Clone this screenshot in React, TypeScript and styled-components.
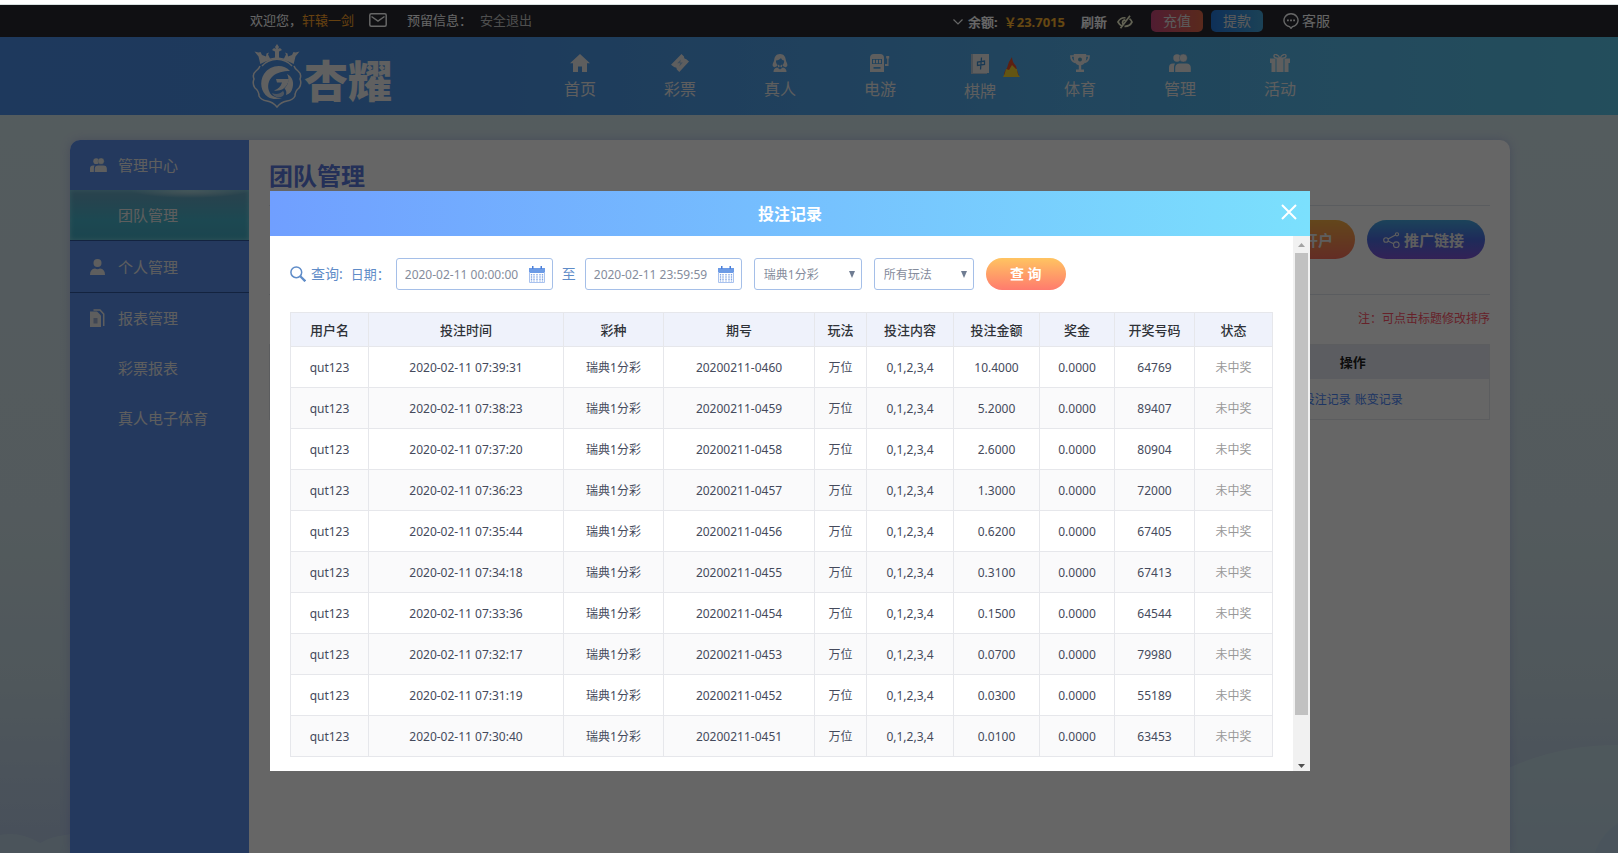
import React from "react";
import styled, { createGlobalStyle, css } from "styled-components";

const GlobalStyle = createGlobalStyle`
  *, *::before, *::after { box-sizing: border-box; }
  body {
    margin: 0;
    background: #fff;
    font-family: "Noto Sans", "Noto Sans CJK SC", sans-serif;
    font-size: 13px;
    line-height: 20px;
  }
  button, input, select { font-family: inherit; margin: 0; }
  a { text-decoration: none; color: inherit; }
  h1, h2, p, ul { margin: 0; padding: 0; }
  svg { display: block; flex: none; }
`;

/* ---------- page frame ---------- */

const Page = styled.div`
  position: relative;
  display: flex;
  flex-direction: column;
  height: 100vh;
  min-height: 640px;
  overflow: hidden;
  border-top: 4px solid #fff;
  background: linear-gradient(#d4e6ed 0%, #d0e2e8 60%, #c6dae4 80%, #b2c6e2 100%);
`;

const Hills = styled.svg`
  position: absolute;
  left: 0;
  bottom: 0;
  width: 100%;
  height: 110px;
`;

const TopBar = styled.header`
  display: flex;
  justify-content: center;
  padding-right: 38px;
  background: #282a31;
  border-top: 1px solid #d8e0e0;
`;

const TopInner = styled.div`
  display: flex;
  align-items: center;
  width: 1080px;
  height: 32px;
  padding-bottom: 2px;
  color: #fff;
`;

const UserName = styled.span`
  color: #ffa42a;
`;

const MailLink = styled.a`
  margin: 0 20px 0 15px;
`;

const LogoutLink = styled.a`
  margin-left: 8px;
  color: #c4c4c4;
`;

const Balance = styled.div`
  display: flex;
  align-items: center;
  margin-left: auto;
  padding-top: 4px;
  font-weight: 700;
`;

const Amount = styled.span`
  margin: 0 16px 0 6px;
  color: #ffb52e;
`;

const PlainButton = styled.button`
  padding: 0;
  border: 0;
  background: none;
  color: inherit;
  font: inherit;
  line-height: inherit;
`;

const EyeButton = styled(PlainButton)`
  margin: 0 18px 0 10px;
`;

const MoneyButton = styled.button<{ $tone: string }>`
  width: 52px;
  height: 22px;
  margin: 2px 8px 0 0;
  padding: 0;
  border: 0;
  border-radius: 5px;
  background: ${(p) => p.$tone};
  color: #e4e4e4;
  font-size: 14px;
  line-height: 22px;
`;

const ServiceLink = styled.a`
  display: flex;
  align-items: center;
  gap: 3px;
  margin: 2px 0 0 12px;
  font-size: 14px;
`;

const NavBar = styled.div`
  position: relative;
  display: flex;
  justify-content: center;
  padding-right: 38px;
  background: linear-gradient(90deg, #4b8ee8 0%, #4b94e6 30%, #56b2ea 72%, #58c2e6 100%);
`;

const NavInner = styled.div`
  display: flex;
  justify-content: space-between;
  width: 1080px;
  height: 78px;
`;

const Brand = styled.a`
  display: flex;
  align-items: center;
  padding-left: 2px;
  color: #f0f0f0;
  font-family: "Noto Sans CJK SC", sans-serif;
  font-size: 44px;
  font-weight: 900;
  line-height: 44px;
`;

const BrandName = styled.span`
  padding-top: 6px;
  margin-left: 2px;
`;

const NavList = styled.nav`
  display: flex;
`;

const NavLink = styled.a<{ $active?: boolean }>`
  position: relative;
  display: flex;
  flex-direction: column;
  align-items: center;
  gap: 6px;
  width: 100px;
  padding-top: 17px;
  color: #ececec;
  font-size: 16px;
  line-height: 22px;
  ${(p) =>
    p.$active &&
    css`
      background: rgba(0, 60, 140, 0.04);
    `}
`;

const HotMark = styled.span`
  position: absolute;
  top: 20px;
  right: 10px;
`;

/* ---------- management card ---------- */

const Main = styled.main`
  position: relative;
  display: flex;
  flex: 1;
  justify-content: center;
  padding: 25px 38px 0 0;
`;

const Card = styled.div`
  display: flex;
  width: 1440px;
  border-radius: 10px 10px 0 0;
  overflow: hidden;
  background: #fff;
  box-shadow: 0 0 10px rgba(120, 120, 210, 0.35);
`;

const Sidebar = styled.aside`
  flex: none;
  width: 179px;
  background: #5a8fec;
`;

const SideLink = styled.a<{ $active?: boolean; $height?: number }>`
  display: flex;
  align-items: center;
  height: ${(p) => p.$height ?? 50}px;
  padding-left: 20px;
  color: #ececec;
  font-size: 15px;
  ${(p) => p.$height && "border-bottom: 1px solid #31589f;"}
  ${(p) =>
    p.$active &&
    css`
      background: radial-gradient(ellipse 60px 8px at 67% 0, #c4dde2, rgba(196, 221, 226, 0)),
        linear-gradient(#6aa4c0, #48b4cc 60%, #44acc4);
      box-shadow: inset 0 0 5px #7fd2e0;
    `}
`;

const SideIcon = styled.span`
  width: 28px;
`;

const Content = styled.section`
  flex: 1;
  padding: 21px 20px 0;
`;

const PageTitle = styled.h1`
  padding-bottom: 14px;
  border-bottom: 1px solid #e2e6ee;
  color: #5a78dc;
  font-size: 24px;
  line-height: 30px;
`;

const Actions = styled.div`
  display: flex;
  justify-content: flex-end;
  gap: 12px;
  padding: 14px 5px 35px 0;
  border-bottom: 1px solid #e2e6ee;
`;

const PillButton = styled.button<{ $tone: string }>`
  display: flex;
  align-items: center;
  justify-content: center;
  gap: 4px;
  width: 118px;
  height: 39px;
  padding: 0 5px 0 0;
  border: 0;
  border-radius: 20px;
  background: ${(p) => p.$tone};
  color: #ececec;
  font-size: 15px;
  font-weight: 700;
`;

const SortNote = styled.p`
  padding: 14px 0 15px;
  color: #ff5468;
  font-size: 12px;
  text-align: right;
`;

const TeamTable = styled.table`
  width: 100%;
  border-collapse: collapse;
  table-layout: fixed;
  border: 1px solid #e6e8ee;
  text-align: center;

  th {
    height: 34px;
    padding: 0;
    background: #e6e9f2;
    color: #222;
    font-size: 13px;
  }
  td {
    height: 41px;
    padding: 2px 0 0;
    font-size: 12px;
  }
  th:last-child {
    width: 273px;
  }
  a {
    margin: 0 2px;
    color: #4a86f8;
  }
`;

/* ---------- bet record dialog ---------- */

const Overlay = styled.div`
  position: absolute;
  inset: 1px 0 0;
  display: flex;
  justify-content: center;
  align-items: flex-start;
  padding: 186px 38px 0 0;
  background: rgba(0, 0, 0, 0.6);
`;

const Dialog = styled.div`
  width: 1040px;
  background: #fff;
`;

const DialogHead = styled.div`
  display: grid;
  grid-template-columns: 42px 1fr 42px;
  align-items: center;
  height: 45px;
  background: linear-gradient(90deg, #709fff, #7be0fd);
  color: #fff;
`;

const DialogTitle = styled.h2`
  grid-column: 2;
  font-size: 16px;
  line-height: 24px;
  text-align: center;
`;

const CloseButton = styled(PlainButton)`
  justify-self: center;
  padding-bottom: 4px;
`;

const DialogBody = styled.div`
  display: flex;
`;

const DialogContent = styled.div`
  flex: 1;
  min-width: 0;
  padding: 22px 20px 14px;
`;

const Filters = styled.form`
  display: flex;
  align-items: center;
  height: 32px;
  margin-bottom: 22px;
  color: #5f8cc8;
  font-size: 14px;
`;

const FilterLabel = styled.span`
  margin: 0 8px 0 5px;
`;

const DateLabel = styled.label`
  width: 45px;
  font-size: 13px;
`;

const fieldBox = css`
  height: 32px;
  border: 1px solid #a5bfe8;
  border-radius: 3px;
  background: #fff;
`;

const DateField = styled.span`
  ${fieldBox}
  display: flex;
  align-items: center;
  width: 157px;
  padding: 0 7px 0 8px;
`;

const DateInput = styled.input`
  flex: 1;
  min-width: 0;
  padding: 0;
  border: 0;
  outline: 0;
  background: none;
  color: #858c9c;
  font-size: 12px;
`;

const RangeWord = styled.label`
  width: 32px;
  text-align: center;
`;

const SelectWrap = styled.span<{ $width: number }>`
  display: grid;
  align-items: center;
  width: ${(p) => p.$width}px;
  margin-left: 12px;

  select,
  svg {
    grid-area: 1 / 1;
  }
  svg {
    justify-self: end;
    margin-right: 7px;
    pointer-events: none;
  }
`;

const Select = styled.select`
  ${fieldBox}
  appearance: none;
  width: 100%;
  padding: 0 20px 0 9px;
  color: #858c9c;
  font-size: 12px;
`;

const SearchButton = styled.button`
  width: 80px;
  height: 32px;
  margin-left: 12px;
  padding: 0 0 2px;
  border: 0;
  border-radius: 16px;
  background: linear-gradient(#ffc461, #ff7b6e);
  color: #fff;
  font-size: 14px;
  font-weight: 700;
`;

const RecordTable = styled.table`
  width: 100%;
  border-collapse: collapse;
  table-layout: fixed;
  text-align: center;

  th,
  td {
    border: 1px solid #e6e7eb;
  }
  th {
    height: 34px;
    padding: 0;
    background: #eff2fb;
    color: #2f3238;
    font-size: 13px;
    font-weight: 500;
  }
  td {
    height: 41px;
    padding: 2px 0 0;
    color: #454a5c;
    font-size: 12px;
  }
  tbody tr:nth-child(even) td {
    background: #fafafb;
  }
  td:last-child {
    color: #999;
  }
`;

const ScrollTrack = styled.div`
  display: flex;
  flex: none;
  flex-direction: column;
  align-items: center;
  width: 17px;
  padding: 7px 0 3px;
  background: #f1f1f1;
`;

const ScrollThumb = styled.div`
  flex: 1;
  width: 13px;
  margin: 6px 0 49px;
  background: #c1c1c1;
`;

/* ---------- icons ---------- */

const PeopleIcon = ({ w = 22, h = 18 }: { w?: number; h?: number }) => (
  <svg width={w} height={h} viewBox="0 0 22 18" fill="currentColor">
    <circle cx="8" cy="4" r="3.7" />
    <circle cx="14.300" cy="4" r="4" stroke="rgba(80,140,200,.6)" strokeWidth=".6" />
    <path d="M0 18v-4.500Q0 9.500 4 9.500h2Q5 11 5 13v5zM6.200 18v-4q0-4.500 4.500-4.500h6.600q4.500 0 4.500 4.500v4z" />
  </svg>
);

const HomeIcon = () => (
  <svg width="20" height="18" viewBox="0 0 20 18" fill="currentColor">
    <path d="M10 0 0 9.300h3V18h5v-5.500h4V18h5V9.300h3z" />
  </svg>
);

const TicketIcon = () => (
  <svg width="18" height="18" viewBox="0 0 18 18">
    <path d="M10.500 0 13 2.600q-.4 2.500 2 2.300L18 7.500 8.300 18 5.800 15.600q.2-2.500-2.300-2.300L0 10.700z" fill="currentColor" />
    <path d="m9.800 5.500-3.600 3.700h3L8.300 12.500l3.600-3.900H9.300z" fill="#4d9be4" opacity=".5" />
  </svg>
);

const DealerIcon = () => (
  <svg width="18" height="18" viewBox="0 0 18 18" fill="currentColor">
    <path fillRule="evenodd" d="M9 0c4 0 5.500 3 5.800 6 .2 2 1.600 3 1.600 5 0 1.500-1 2-2 2.200-1.400-.4-3-1.200-3-2.200 1.300-1 2-2.600 1.700-4.500C11.500 6.300 10.500 5.500 10 4 8.800 5.700 7 6.300 5 6.500 4.800 8.400 5.400 10 6.700 11c0 1-1.600 1.800-3.100 2.200-1-.2-2-.7-2-2.200 0-2 1.400-3 1.600-5C3.500 3 5 0 9 0z" />
    <path d="M2.500 18q0-4 3.700-4.500L9 15.500l2.800-2q3.700.5 3.700 4.500z" />
    <path d="m7 10.500 2 1.400 2-1.400v3l-2-1.300-2 1.300z" />
  </svg>
);

const SlotIcon = () => (
  <svg width="20" height="18" viewBox="0 0 20 18" fill="currentColor">
    <path fillRule="evenodd" d="M0 18V4q0-4 4-4h6q4 0 4 4v14zM2 5v5h10V5zm1.500 8v1.800h7V13z" />
    <path d="M3 5.800h2v3.400H3zM6 5.800h2v3.400H6zM9 5.800h2v3.400H9zM15 10h2.200V4.500h-1V2h3v2.500h-.7V12H15z" />
  </svg>
);

const TileIcon = () => (
  <svg width="18" height="20" viewBox="0 0 18 20">
    <path d="M0 0h16v20H0z" fill="#b8c8d8" />
    <path d="M2 0h16v19H2z" fill="currentColor" />
    <path d="M6.500 11.500V8l7-1v3.500zM10.500 3.500l-1 12" fill="none" stroke="#3f8fd0" strokeWidth="1.300" />
  </svg>
);

const TrophyIcon = () => (
  <svg width="20" height="18" viewBox="0 0 20 18">
    <path d="M4 2H1q0 5 4.500 6.500M16 2h3q0 5-4.500 6.500" fill="none" stroke="currentColor" strokeWidth="1.700" />
    <path d="M3.800 0h12.400v5q-.6 5-5 6.300v4.200H14V18H6v-2.500h2.800v-4.200Q4.400 10 3.800 5z" fill="currentColor" />
    <circle cx="10" cy="5.500" r="2" fill="#5aa5c9" />
  </svg>
);

const GiftIcon = () => (
  <svg width="20" height="18" viewBox="0 0 20 18" fill="currentColor">
    <path d="M0 4.500h5.500V9H0zM6.500 4.500h7V9h-7zM14.500 4.500H20V9h-5.500zM1.500 9h4v9h-4zM6.500 9h7v9h-7zM14.500 9h4v9h-4z" />
    <path d="M10 4.500C8-.5 3.500-.5 4 2.500q.4 1.700 6 2 5.600-.3 6-2C16.500-.5 12-.5 10 4.500z" fill="none" stroke="currentColor" strokeWidth="1.300" />
  </svg>
);

const FireIcon = () => (
  <svg width="17" height="20" viewBox="0 0 17 20">
    <path d="M1 19Q1 14 4 11q1-6 5-11 0 5 4 9 1 5 3 10z" fill="#e8502c" />
    <path d="M0 20q2-3 3-8l3 1 3-5 4 4 1 0q0 5 3 8z" fill="#f8d42f" />
  </svg>
);

const EmblemIcon = () => (
  <svg width="50" height="66" viewBox="0 0 50 66" fill="currentColor">
    <path d="M25 1l2 3-1 2 2-1 2 2-3 1.500v6l5 1 2-4-1-2 2.500 1 .5 3 4-1.500 1.500-3 2 .5 4-1-4 5-1.800 7.500Q32 16 25 16T8.300 21L6.500 13.500l-4-5 4 1 2-.5 1.500 3 4 1.500.5-3 2.500-1-1 2 2 4 5-1v-6L20 7l2-2 2 1-1-2z" />
    <path d="M8 23Q7 26 4 28 0 31 2 36q-2 5 1 9 4 3 4 8 2 4 8 5 6 1 10 6 4-5 10-6 6-1 8-5 0-5 4-8 3-4 1-9 2-5-2-8-3-2-4-5" fill="none" stroke="currentColor" strokeWidth="1.500" />
    <path d="M10 23a20 20 0 0 1 30 0" fill="none" stroke="currentColor" strokeWidth="1.500" />
    <path d="M38 28C31 20 18 22 12 31 7 39 9 49 16 54c4 2.500 10 2.500 14 1-6 0-11-2-12.500-6C15 44 16 37 21 33c4-3.500 10-5 17-5z" />
    <path d="M24 36h13c-1 5-3 8-6 10-3 1.500-6 2-9 1.500 4-1.500 7-4 8-8H25z" />
    <path d="M35 31c6 3 7 9 5.500 14-1 4-3 6-6.500 7 1-3 0-5-1.500-6.500C36 42 38 36 35 31z" />
    <path d="M20 50c4 2 8 1 11-2 2 2 1 5-2 6-4 1-8-1-9-4z" opacity=".7" />
  </svg>
);

const SideUserIcon = () => (
  <svg width="15" height="16" viewBox="0 0 15 16" fill="currentColor">
    <circle cx="7.500" cy="4" r="4" />
    <path d="M0 16q0-6 5-6.500 2.500 1.400 5 0 5 .5 5 6.500z" />
  </svg>
);

const ReportIcon = () => (
  <svg width="15" height="18" viewBox="0 0 15 18">
    <path d="M3.500 1H10l3.700 4v12" fill="none" stroke="currentColor" strokeWidth="1.500" />
    <path d="M0 2.500h7l4 4V18H0z" fill="currentColor" />
    <path d="M3.500 9h4v5.500h-4z" fill="#9daed2" />
  </svg>
);

const MailIcon = () => (
  <svg width="18" height="14" viewBox="0 0 18 14" fill="none" stroke="currentColor" strokeWidth="1.500">
    <rect x=".8" y=".8" width="16.400" height="12.400" rx="1.500" />
    <path d="m2.500 3.500 6.500 4.500 6.500-4.500" />
  </svg>
);

const EyeOffIcon = () => (
  <svg width="16" height="14" viewBox="0 0 16 14" fill="none" stroke="#f4f4d0" strokeWidth="1.700">
    <path d="M8.500 2.800C5 2.500 2.500 4 1 7c1 1.800 2 3 3.600 3.700M7.500 11.300C11 11.500 13.500 10 15 7c-.7-1.500-1.400-2.600-2.500-3.300M6 9.200C4.700 7 6 5 8.300 4.800M3.500 13.300 13 .8" />
  </svg>
);

const ChatIcon = () => (
  <svg width="16" height="16" viewBox="0 0 16 16" fill="none" stroke="currentColor" strokeWidth="1.400">
    <path d="M6.500 13.600A7 6.500 0 1 1 9.500 13.600L8 15.300z" />
    <path d="M4 7.300h1.800M7.100 7.300h1.800M10.200 7.300H12" strokeWidth="1.800" />
  </svg>
);

const ShareIcon = () => (
  <svg width="17" height="16" viewBox="0 0 17 16" fill="none" stroke="currentColor" strokeWidth="1.100">
    <circle cx="3" cy="8" r="2.300" />
    <circle cx="14" cy="2.300" r="1.600" />
    <circle cx="13.300" cy="12.700" r="2.800" />
    <path d="m5 7 7.500-4M5 9l5.700 2.700" />
  </svg>
);

const SearchIcon = () => (
  <svg width="16" height="16" viewBox="0 0 16 16" fill="none" stroke="#5f8cc8">
    <circle cx="6.300" cy="6.300" r="5.400" strokeWidth="1.500" />
    <path d="m10.300 10.300 5 5" strokeWidth="2.300" />
  </svg>
);

const CalendarIcon = () => (
  <svg width="16" height="17" viewBox="0 0 16 17">
    <path d="M0 2h16v5H0z" fill="#6c9be6" />
    <path d="M3 0h1.500v3H3zM11.500 0H13v3h-1.500z" fill="#4c7fd8" />
    <path d="M.5 6v10.500h15V6" fill="none" stroke="#a9c2ee" />
    <path d="M2.500 8v7.500M5 8v7.500M8 8v7.500M11 8v7.500M13.500 8v7.500" stroke="#7fa4e4" strokeDasharray="1.600 .6" strokeWidth="1.300" />
  </svg>
);

const CaretIcon = () => (
  <svg width="6" height="7" viewBox="0 0 6 7">
    <path d="M0 0h6L3 7z" fill="#6f7c92" />
  </svg>
);

const CloseIcon = () => (
  <svg width="16" height="16" viewBox="0 0 16 16" stroke="#fff" strokeWidth="2">
    <path d="m1 1 14 14M15 1 1 15" />
  </svg>
);

const ChevronIcon = () => (
  <svg width="15" height="6" viewBox="0 0 15 6" fill="none" stroke="currentColor" strokeWidth="1.200">
    <path d="m.5.500 4.500 4.500L9.500.500" />
  </svg>
);

const ScrollArrow = ({ down }: { down?: boolean }) => (
  <svg width="7" height="4" viewBox="0 0 7 4">
    <path d={down ? "M0 0h7L3.500 4z" : "M0 4h7L3.500 0z"} fill={down ? "#505050" : "#a3a3a3"} />
  </svg>
);

/* ---------- data ---------- */

const navItems = [
  { label: "首页", icon: <HomeIcon /> },
  { label: "彩票", icon: <TicketIcon /> },
  { label: "真人", icon: <DealerIcon /> },
  { label: "电游", icon: <SlotIcon /> },
  { label: "棋牌", icon: <TileIcon />, hot: true },
  { label: "体育", icon: <TrophyIcon /> },
  { label: "管理", icon: <PeopleIcon />, active: true },
  { label: "活动", icon: <GiftIcon /> },
];

const sideItems = [
  { label: "管理中心", icon: <PeopleIcon w={17} h={14} /> },
  { label: "团队管理", active: true, height: 51 },
  { label: "个人管理", icon: <SideUserIcon />, height: 52 },
  { label: "报表管理", icon: <ReportIcon />, },
  { label: "彩票报表" },
  { label: "真人电子体育" },
];

const columns: [string, number][] = [
  ["用户名", 78],
  ["投注时间", 195],
  ["彩种", 100],
  ["期号", 151],
  ["玩法", 52],
  ["投注内容", 87],
  ["投注金额", 86],
  ["奖金", 75],
  ["开奖号码", 80],
  ["状态", 78],
];

const records = [
  ["07:39:31", "0460", "10.4000", "64769"],
  ["07:38:23", "0459", "5.2000", "89407"],
  ["07:37:20", "0458", "2.6000", "80904"],
  ["07:36:23", "0457", "1.3000", "72000"],
  ["07:35:44", "0456", "0.6200", "67405"],
  ["07:34:18", "0455", "0.3100", "67413"],
  ["07:33:36", "0454", "0.1500", "64544"],
  ["07:32:17", "0453", "0.0700", "79980"],
  ["07:31:19", "0452", "0.0300", "55189"],
  ["07:30:40", "0451", "0.0100", "63453"],
];

/* ---------- view ---------- */

function BetRecordDialog() {
  return (
    <Dialog role="dialog" aria-labelledby="dialog-title">
      <DialogHead>
        <DialogTitle id="dialog-title">投注记录</DialogTitle>
        <CloseButton type="button" aria-label="关闭">
          <CloseIcon />
        </CloseButton>
      </DialogHead>
      <DialogBody>
        <DialogContent>
          <Filters onSubmit={(e) => e.preventDefault()}>
            <SearchIcon />
            <FilterLabel>查询:</FilterLabel>
            <DateLabel htmlFor="date-from">日期：</DateLabel>
            <DateField>
              <DateInput id="date-from" defaultValue="2020-02-11 00:00:00" />
              <CalendarIcon />
            </DateField>
            <RangeWord htmlFor="date-to">至</RangeWord>
            <DateField>
              <DateInput id="date-to" defaultValue="2020-02-11 23:59:59" />
              <CalendarIcon />
            </DateField>
            <SelectWrap $width={108}>
              <Select aria-label="彩种">
                <option>瑞典1分彩</option>
              </Select>
              <CaretIcon />
            </SelectWrap>
            <SelectWrap $width={100}>
              <Select aria-label="玩法">
                <option>所有玩法</option>
              </Select>
              <CaretIcon />
            </SelectWrap>
            <SearchButton type="submit">查 询</SearchButton>
          </Filters>
          <RecordTable>
            <colgroup>
              {columns.map(([name, width]) => (
                <col key={name} width={width} />
              ))}
            </colgroup>
            <thead>
              <tr>
                {columns.map(([name]) => (
                  <th key={name} scope="col">{name}</th>
                ))}
              </tr>
            </thead>
            <tbody>
              {records.map(([time, issue, amount, result]) => (
                <tr key={issue}>
                  <td>qut123</td>
                  <td>{`2020-02-11 ${time}`}</td>
                  <td>瑞典1分彩</td>
                  <td>{`20200211-${issue}`}</td>
                  <td>万位</td>
                  <td>0,1,2,3,4</td>
                  <td>{amount}</td>
                  <td>0.0000</td>
                  <td>{result}</td>
                  <td>未中奖</td>
                </tr>
              ))}
            </tbody>
          </RecordTable>
        </DialogContent>
        <ScrollTrack aria-hidden="true">
          <ScrollArrow />
          <ScrollThumb />
          <ScrollArrow down />
        </ScrollTrack>
      </DialogBody>
    </Dialog>
  );
}

export default function App() {
  return (
    <>
      <GlobalStyle />
      <Page lang="zh-CN">
        <Hills viewBox="0 0 1618 110" preserveAspectRatio="none" aria-hidden="true">
          <path d="M0 110V92q20-4 40 8 20-12 60-8v18z" fill="#c2dbe4" opacity=".6" />
          <path d="M1400 110q90-108 218-108v108z" fill="#c8e2e8" opacity=".6" />
          <path d="M1595 110q4-16 23-30v30z" fill="#b4d0e6" opacity=".6" />
        </Hills>
        <TopBar>
          <TopInner>
            <span>欢迎您，</span>
            <UserName>轩辕一剑</UserName>
            <MailLink href="#mail" aria-label="站内信">
              <MailIcon />
            </MailLink>
            <span>预留信息：</span>
            <LogoutLink href="#logout">安全退出</LogoutLink>
            <Balance>
              <ChevronIcon />
              <span>余额:</span>
              <Amount>￥23.7015</Amount>
              <PlainButton type="button">刷新</PlainButton>
              <EyeButton type="button" aria-label="隐藏余额">
                <EyeOffIcon />
              </EyeButton>
            </Balance>
            <MoneyButton type="button" $tone="linear-gradient(90deg, #c8487c, #e06848)">充值</MoneyButton>
            <MoneyButton type="button" $tone="linear-gradient(90deg, #2478dc, #44a4d8)">提款</MoneyButton>
            <ServiceLink href="#service">
              <ChatIcon />
              客服
            </ServiceLink>
          </TopInner>
        </TopBar>
        <NavBar>
          <NavInner>
            <Brand href="#home">
              <EmblemIcon />
              <BrandName>杏耀</BrandName>
            </Brand>
            <NavList>
              {navItems.map((item) => (
                <NavLink key={item.label} href="#nav" $active={item.active}>
                  {item.icon}
                  {item.label}
                  {item.hot && (
                    <HotMark>
                      <FireIcon />
                    </HotMark>
                  )}
                </NavLink>
              ))}
            </NavList>
          </NavInner>
        </NavBar>
        <Main>
          <Card>
            <Sidebar>
              {sideItems.map((item) => (
                <SideLink key={item.label} href="#side" $active={item.active} $height={item.height}>
                  <SideIcon>{item.icon}</SideIcon>
                  {item.label}
                </SideLink>
              ))}
            </Sidebar>
            <Content>
              <PageTitle>团队管理</PageTitle>
              <Actions>
                <PillButton type="button" $tone="linear-gradient(#f8b045, #f8705c)">
                  <SideUserIcon />
                  精准开户
                </PillButton>
                <PillButton type="button" $tone="linear-gradient(#45a8e0, #4c6ce0 50%, #8054d8)">
                  <ShareIcon />
                  推广链接
                </PillButton>
              </Actions>
              <SortNote>注：可点击标题修改排序</SortNote>
              <TeamTable>
                <thead>
                  <tr>
                    <th />
                    <th scope="col">操作</th>
                  </tr>
                </thead>
                <tbody>
                  <tr>
                    <td />
                    <td>
                      <a href="#bets">投注记录</a>
                      <a href="#changes">账变记录</a>
                    </td>
                  </tr>
                </tbody>
              </TeamTable>
            </Content>
          </Card>
        </Main>
        <Overlay>
          <BetRecordDialog />
        </Overlay>
      </Page>
    </>
  );
}
